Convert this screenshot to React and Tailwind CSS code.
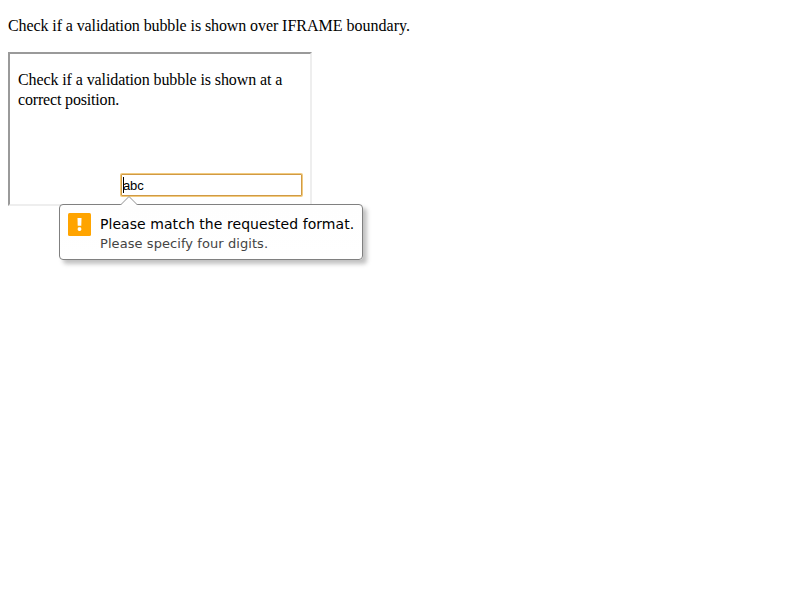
function ValidationBubble() {
  return (
    <div className='absolute left-[49px] top-[150px] h-[56px] w-[304px] rounded-[4px] border border-[#808080] bg-linear-to-b from-[#fefefe] to-white shadow-[4px_4px_4px_rgba(100,100,100,0.4)] font-["DejaVu_Sans",sans-serif]'>
      <svg className="absolute left-[60px] top-[-9px]" width="18" height="10" viewBox="0 0 18 10">
        <path d="M0.5 9L9 0.5L17.5 9V10H0.5Z" fill="white" />
        <path d="M0.5 9L9 0.5L17.5 9" fill="none" stroke="#909090" />
      </svg>
      <div className="flex gap-[9px] pl-[8px] pt-[8px]">
        <svg width="23" height="23" viewBox="0 0 23 23" className="shrink-0">
          <rect width="23" height="23" rx="1.5" fill="#ffa400" />
          <path d="M9.5 5H13.5L13.3 12.8H9.7Z" fill="white" />
          <rect x="9.7" y="14.3" width="3.6" height="3.6" rx="1.4" fill="white" />
        </svg>
        <div className="whitespace-nowrap">
          <p className="pt-[2px] text-[14px] leading-[18px] tracking-[0.055px] text-black">Please match the requested format.</p>
          <p className="pt-[2px] text-[13px] leading-[17px] tracking-[0.07px] text-[#444]">Please specify four digits.</p>
        </div>
      </div>
    </div>
  );
}

export default function App() {
  return (
    <div className='h-[600px] bg-white px-2 pt-4 font-["Liberation_Serif",serif] text-[16px] leading-[20px] text-black'>
      <p className="mb-4">
        <span className="tracking-[-0.095px]">Check if a validation bubble is shown over </span>IFRAME boundary.
      </p>
      <div className="relative flex h-[154px] w-[304px] flex-col border-2 border-b-[#eeeeee] border-l-[#9a9a9a] border-r-[#eeeeee] border-t-[#9a9a9a] px-2 pt-4">
        <p className="tracking-[-0.1px]">
          Check if a validation bubble is shown at a <span className="tracking-[-0.17px]">correct position.</span>
        </p>
        <div className='ml-[103px] mt-[64px] flex h-[22px] w-[181px] shrink-0 items-center rounded-[1px] border border-[#d09a45] bg-white pl-px font-["Liberation_Sans",sans-serif] text-[13px] leading-[15px] tracking-[-0.15px] shadow-[0_0_0_1px_rgba(229,151,0,0.5)]'>
          <span className="h-[16px] w-px bg-black" />
          <span className="-ml-px">abc</span>
        </div>
        <ValidationBubble />
      </div>
    </div>
  );
}
